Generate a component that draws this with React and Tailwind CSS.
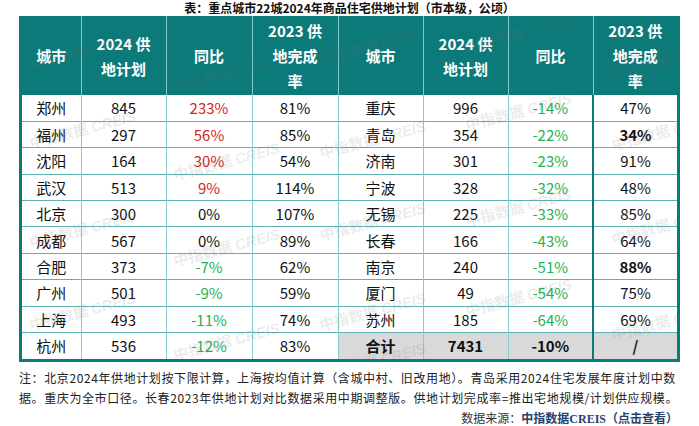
import React from 'react';

const left = [
  ['郑州', '845', '233%', '81%'],
  ['福州', '297', '56%', '85%'],
  ['沈阳', '164', '30%', '54%'],
  ['武汉', '513', '9%', '114%'],
  ['北京', '300', '0%', '107%'],
  ['成都', '567', '0%', '89%'],
  ['合肥', '373', '-7%', '62%'],
  ['广州', '501', '-9%', '59%'],
  ['上海', '493', '-11%', '74%'],
  ['杭州', '536', '-12%', '83%'],
];

const right = [
  ['重庆', '996', '-14%', '47%'],
  ['青岛', '354', '-22%', '34%'],
  ['济南', '301', '-23%', '91%'],
  ['宁波', '328', '-32%', '48%'],
  ['无锡', '225', '-33%', '85%'],
  ['长春', '166', '-43%', '64%'],
  ['南京', '240', '-51%', '88%'],
  ['厦门', '49', '-54%', '75%'],
  ['苏州', '185', '-64%', '69%'],
  ['合计', '7431', '-10%', '/'],
];

const boldRate = ['34%', '88%'];

function yoyColor(v) {
  if (v.startsWith('-')) return 'text-[#1fb155]';
  if (v === '0%') return 'text-[#111]';
  return 'text-[#d11f1f]';
}

// watermark spots, page coords
const marks = [
  [28, 40], [172, 62], [318, 34], [464, 22], [610, 48],
  [28, 118], [172, 150], [318, 128], [464, 100], [610, 120],
  [28, 218], [172, 236], [318, 210], [464, 196], [610, 214],
  [28, 300], [172, 330], [318, 300], [464, 286], [610, 310],
  [318, 350],
];

function HeadCell({ children, last }) {
  return (
    <th className={'h-[79px] p-0 align-middle text-center font-bold text-white text-[15px] leading-[25px] ' + (last ? '' : 'border-r border-[#7ccaca]')}>
      {children}
    </th>
  );
}

export default function App() {
  return (
    <div className="w-[699px] h-[426px] bg-white overflow-hidden font-['Noto_Sans_CJK_SC',sans-serif] text-[#111]">
      <div className="h-[16px] text-center text-[12px] leading-[15px] font-bold">
        表：重点城市22城2024年商品住宅供地计划（市本级，公顷）
      </div>

      <div className="relative overflow-hidden ml-[19px] w-[661px] border-x-[3px] border-b-[3px] border-[#0d7a7a]">
        <table className="w-full table-fixed border-collapse">
          <colgroup>
            <col className="w-[59px]" />
            <col className="w-[85px]" />
            <col className="w-[86px]" />
            <col className="w-[86px]" />
            <col className="w-[85px]" />
            <col className="w-[85px]" />
            <col className="w-[85px]" />
            <col className="w-[84px]" />
          </colgroup>
          <thead>
            <tr className="bg-[#0d7a7a]">
              <HeadCell>城市</HeadCell>
              <HeadCell>2024 供<br />地计划</HeadCell>
              <HeadCell>同比</HeadCell>
              <HeadCell>2023 供<br />地完成<br />率</HeadCell>
              <HeadCell>城市</HeadCell>
              <HeadCell>2024 供<br />地计划</HeadCell>
              <HeadCell>同比</HeadCell>
              <HeadCell last>2023 供<br />地完成<br />率</HeadCell>
            </tr>
          </thead>
          <tbody className="text-[15px] leading-none">
            {left.map((l, i) => {
              const r = right[i];
              const total = i === right.length - 1;
              const rb = total || boldRate.includes(r[3]) ? 'font-bold' : '';
              const g = total ? 'bg-[#d9d9d9] font-bold' : '';
              return (
                <tr key={i} className={i === 0 ? '' : 'border-t border-[#5fb0b0]'}>
                  <td className="h-[26.4px] p-0 text-center border-r border-[#86cccc]">{l[0]}</td>
                  <td className="p-0 text-center border-r border-[#86cccc]">{l[1]}</td>
                  <td className={'p-0 text-center border-r border-[#86cccc] ' + yoyColor(l[2])}>{l[2]}</td>
                  <td className="p-0 text-center border-r border-[#86cccc]">{l[3]}</td>
                  <td className={'p-0 text-center border-r border-[#86cccc] ' + g}>{r[0]}</td>
                  <td className={'p-0 text-center border-r border-[#86cccc] ' + g}>{r[1]}</td>
                  <td className={'p-0 text-center border-r-2 border-r-[#0d7a7a] ' + (total ? 'bg-[#d9d9d9] font-bold text-[#111]' : yoyColor(r[2]))}>{r[2]}</td>
                  <td className={'p-0 text-center ' + rb + (total ? ' bg-[#d9d9d9]' : '')}>{r[3]}</td>
                </tr>
              );
            })}
          </tbody>
        </table>

        {marks.map(([x, y], i) => (
          <span
            key={i}
            aria-hidden="true"
            className="absolute pointer-events-none select-none whitespace-nowrap text-[15px] font-bold text-[rgba(110,110,110,0.15)] -rotate-[15deg]"
            style={{ left: x - 22, top: y - 16 }}
          >
            中指数据 <span className="font-['Liberation_Sans',sans-serif] italic">CREIS</span>
          </span>
        ))}
      </div>

      <div className="mt-[6px] ml-[19px] w-[665px] text-[12px] leading-[20px] tracking-[0.6px] text-[#222]">
        <div className="whitespace-nowrap">注：北京2024年供地计划按下限计算，上海按均值计算（含城中村、旧改用地）。青岛采用2024住宅发展年度计划中数</div>
        <div className="whitespace-nowrap">据。重庆为全市口径。长春2023年供地计划对比数据采用中期调整版。供地计划完成率=推出宅地规模/计划供应规模。</div>
        <div className="flex justify-end pr-[6px] whitespace-nowrap tracking-normal">
          <span className="text-[#333]">数据来源：</span>
          <span className="font-bold text-[#2a3f6e]">
            中指数据<span className="font-['Liberation_Serif',serif]">CREIS</span>（点击查看）
          </span>
        </div>
      </div>
    </div>
  );
}
